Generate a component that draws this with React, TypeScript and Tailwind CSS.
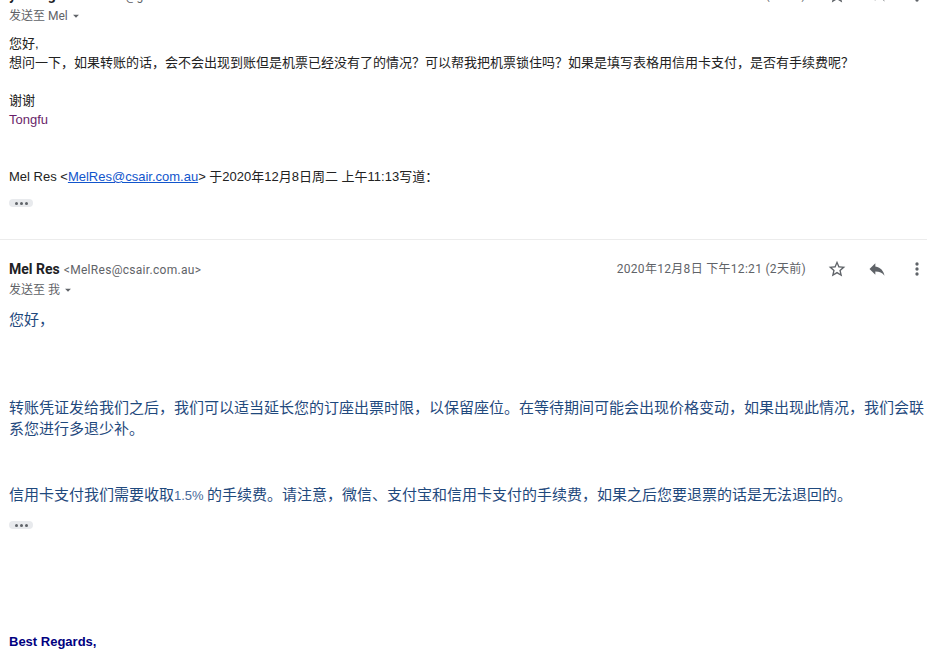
import React from "react";

const Star = () => (
  <svg width="20" height="20" viewBox="0 0 24 24" fill="#5f6368">
    <path d="M22 9.24l-7.19-.62L12 2 9.19 8.63 2 9.24l5.46 4.73L5.82 21 12 17.27 18.18 21l-1.63-7.03L22 9.24zM12 15.4l-3.76 2.27 1-4.28-3.32-2.88 4.38-.38L12 6.1l1.71 4.04 4.38.38-3.32 2.88 1 4.28L12 15.4z" />
  </svg>
);
const Reply = () => (
  <svg width="20" height="20" viewBox="0 0 24 24" fill="#5f6368">
    <path d="M10 9V5l-7 7 7 7v-4.1c5 0 8.5 1.6 11 5.1-1-5-4-10-11-11z" />
  </svg>
);
const More = () => (
  <svg width="20" height="20" viewBox="0 0 24 24" fill="#5f6368">
    <circle cx="12" cy="6" r="2" />
    <circle cx="12" cy="12" r="2" />
    <circle cx="12" cy="18" r="2" />
  </svg>
);
const Caret = () => (
  <svg width="14" height="14" viewBox="0 0 24 24" fill="#5f6368">
    <path d="M7 10l5 5 5-5z" />
  </svg>
);
const Dots = () => (
  <div className="w-[24px] h-[8px] rounded-[4px] bg-[#e8eaed] flex items-center justify-center gap-[2px]">
    <span className="w-[3px] h-[3px] rounded-full bg-[#5f6368]" />
    <span className="w-[3px] h-[3px] rounded-full bg-[#5f6368]" />
    <span className="w-[3px] h-[3px] rounded-full bg-[#5f6368]" />
  </div>
);

const Header = ({ name, email, date }: { name: string; email: string; date: string }) => (
  <div className="h-[20px] flex items-center justify-between">
    <div className="flex items-baseline gap-[4px] font-['Roboto','Liberation_Sans',sans-serif]">
      <span className="text-[14px] font-bold text-[#202124]">{name}</span>
      <span className="text-[12px] tracking-[0.3px] text-[#5f6368]">{email}</span>
    </div>
    <div className="flex items-center">
      <span className="text-[12px] tracking-[0.3px] text-[#5f6368] font-['Roboto','Noto_Sans_CJK_SC',sans-serif] mr-[21px]">{date}</span>
      <div className="flex items-center gap-[20px]">
        <Star />
        <Reply />
        <More />
      </div>
    </div>
  </div>
);

const SentTo = ({ to }: { to: string }) => (
  <div className="h-[16px] mt-[3px] flex items-center text-[12px] leading-[16px] text-[#5f6368] font-['Roboto','Noto_Sans_CJK_SC',sans-serif]">
    <span>{to}</span>
    <span className="ml-[1px] flex items-center"><Caret /></span>
  </div>
);

export default function App() {
  return (
    <div className="w-[933px] h-[650px] overflow-hidden bg-white">
      <div className="pl-[9px] pr-[6px] -mt-[15px]">
        <Header name="yu tongfu" email="<tf.x1985@gmail.com>" date="2020年12月8日 上午11:13 (2天前)" />
        <SentTo to="发送至 Mel" />
        <div className="mt-[10px] text-[13px] leading-[19px] text-[#222222] font-['Liberation_Sans','Noto_Sans_CJK_SC',sans-serif]">
          <div>您好,</div>
          <div>想问一下，如果转账的话，会不会出现到账但是机票已经没有了的情况？可以帮我把机票锁住吗？如果是填写表格用信用卡支付，是否有手续费呢？</div>
          <div className="h-[19px]" />
          <div>谢谢</div>
          <div className="text-[#6a1f6a]">Tongfu</div>
          <div className="h-[19px]" />
          <div className="h-[19px]" />
          <div>
            Mel Res &lt;<span className="text-[#1155cc] underline">MelRes@csair.com.au</span>&gt; 于2020年12月8日周二 上午11:13写道：
          </div>
        </div>
        <div className="mt-[13px]">
          <Dots />
        </div>
      </div>
      <div className="mt-[32px] h-[1px] w-[927px] bg-[#ececec]" />
      <div className="pl-[9px] pr-[6px]">
        <div className="mt-[19px]">
          <Header name="Mel Res" email="<MelRes@csair.com.au>" date="2020年12月8日 下午12:21 (2天前)" />
        </div>
        <SentTo to="发送至 我" />
        <div className="text-[15px] leading-[21px] text-[#1f497d] font-['Noto_Sans_CJK_SC',sans-serif]">
          <div className="mt-[10px]">您好，</div>
          <div className="mt-[67px]">转账凭证发给我们之后，我们可以适当延长您的订座出票时限，以保留座位。在等待期间可能会出现价格变动，如果出现此情况，我们会联系您进行多退少补。</div>
          <div className="mt-[45px]">
            信用卡支付我们需要收取<span className="text-[13px] text-[#4a6a9a] font-['Liberation_Sans',sans-serif]">1.5%</span> 的手续费。请注意，微信、支付宝和信用卡支付的手续费，如果之后您要退票的话是无法退回的。
          </div>
        </div>
        <div className="mt-[15px]">
          <Dots />
        </div>
        <div className="mt-[105px] text-[13px] leading-[16px] font-bold text-[#000080] font-['Liberation_Sans',sans-serif]">Best Regards,</div>
      </div>
    </div>
  );
}
